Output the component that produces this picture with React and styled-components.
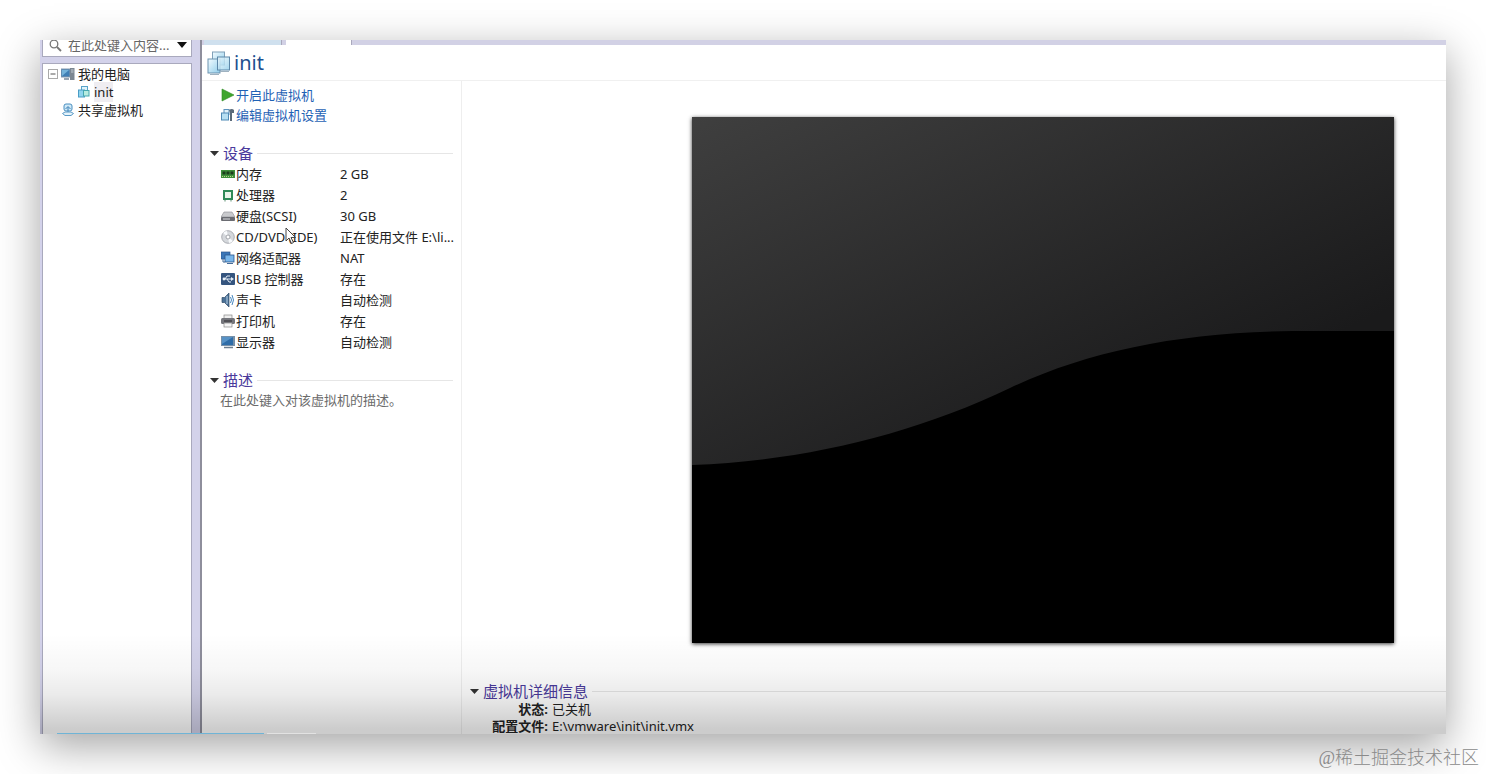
import React from "react";
import styled, { createGlobalStyle } from "styled-components";

const devices = [
  { id: "memory", name: "内存", value: "2 GB" },
  { id: "cpu", name: "处理器", value: "2" },
  { id: "disk", name: "硬盘(SCSI)", value: "30 GB" },
  { id: "cd", name: "CD/DVD (IDE)", value: "正在使用文件 E:\\li..." },
  { id: "network", name: "网络适配器", value: "NAT" },
  { id: "usb", name: "USB 控制器", value: "存在" },
  { id: "sound", name: "声卡", value: "自动检测" },
  { id: "printer", name: "打印机", value: "存在" },
  { id: "display", name: "显示器", value: "自动检测" },
];

const details = [
  { label: "状态:", value: "已关机" },
  { label: "配置文件:", value: "E:\\vmware\\init\\init.vmx" },
];

const icons = {
  memory: (
    <>
      <rect x="0" y="3" width="14" height="8" fill="#3f8f3c" />
      <path d="M1.5 4.5h3v3h-3zM5.5 4.5h3v3h-3zM9.5 4.5h3v3h-3z" fill="#1c3d1d" />
      <path d="M1 9.5h12" stroke="#b9d68a" strokeDasharray="1 1" />
    </>
  ),
  cpu: (
    <>
      <rect x="2" y="2" width="10" height="10" fill="#2f8a58" />
      <rect x="4" y="4" width="6" height="6" fill="#e9f5ea" />
      <path d="M4 12v1.500M10 12v1.500" stroke="#5b8f70" />
    </>
  ),
  disk: (
    <>
      <path d="M3 3h8l3 5H0z" fill="#c9cacd" stroke="#8b8c90" strokeWidth=".6" />
      <rect x="0" y="8" width="14" height="4" rx="1" fill="#6b6c72" />
      <path d="M2 10h7" stroke="#d9dadd" />
    </>
  ),
  cd: (
    <>
      <circle cx="7" cy="7" r="6.300" fill="#d5d8dc" stroke="#9a9da3" strokeWidth=".8" />
      <path d="M7 7L2 3a6 6 0 0 1 4-2zM7 7l5 4a6 6 0 0 1-4 2z" fill="#f8fafc" />
      <circle cx="7" cy="7" r="2" fill="#fff" stroke="#8f9399" strokeWidth=".8" />
    </>
  ),
  network: (
    <>
      <rect x="0" y="1" width="9" height="7" fill="#3a76b8" stroke="#2b568c" strokeWidth=".7" />
      <rect x="4" y="4" width="9" height="7" fill="#79b6ea" stroke="#2b568c" strokeWidth=".8" />
      <path d="M2 8v3h2M6 12.500h6" stroke="#456c99" fill="none" />
    </>
  ),
  usb: (
    <>
      <rect x="0" y="1" width="14" height="12" rx="1" fill="#35557f" />
      <path d="M2 7h9M4 7l2-3h3M6 7l2 3h2" stroke="#e7eff8" fill="none" />
      <path d="M10 5l3 2-3 2z" fill="#e7eff8" />
      <circle cx="3" cy="7" r="1.400" fill="#e7eff8" />
    </>
  ),
  sound: (
    <>
      <path d="M1 4.500h2.500L8 0v14L3.500 9.500H1z" fill="#4b7196" stroke="#2f4b69" strokeWidth=".7" />
      <path d="M6 3v8" stroke="#b9d3e8" />
      <path d="M9.500 4q2 3 0 6M11 2q3 5 0 10" stroke="#4788c0" fill="none" />
    </>
  ),
  printer: (
    <>
      <rect x="3" y="1" width="8" height="4" fill="#eee" stroke="#888" strokeWidth=".7" />
      <rect x="0" y="4" width="14" height="6" rx="1.500" fill="#74757b" />
      <path d="M3 7h8" stroke="#2c2c31" />
      <rect x="3" y="9" width="8" height="4" fill="#f5f5f5" stroke="#888" strokeWidth=".7" />
    </>
  ),
  display: (
    <>
      <rect x="0" y="1" width="14" height="10" fill="#7790a8" />
      <rect x="1" y="2" width="11" height="8" fill="#2f6da8" />
      <path d="M1 2h11L1 9z" fill="#5792c6" />
      <path d="M3 12.500h9" stroke="#6c7d8e" strokeWidth="1.500" />
    </>
  ),
  computer: (
    <>
      <rect x="0" y="2" width="9" height="8" fill="#3f7fb5" stroke="#8499ad" />
      <path d="M1 3h7L1 9z" fill="#74b3da" />
      <path d="M3 12h5" stroke="#77889a" strokeWidth="1.500" />
      <rect x="9" y="1" width="4.500" height="12" fill="#7b8691" />
      <path d="M10 3h2.500M10 5h2.500" stroke="#c4ccd4" />
    </>
  ),
  vm: (
    <>
      <rect x="4.500" y="1.500" width="6" height="6" fill="#dff3fb" stroke="#58a3c9" />
      <rect x="1.500" y="5" width="6" height="7" fill="#8fd4ee" stroke="#4a9cc6" />
      <rect x="6.500" y="5.500" width="5.500" height="5.500" fill="#b8ecdf" stroke="#46a7b0" />
    </>
  ),
  shared: (
    <>
      <rect x="3" y="1" width="8" height="7" rx="2" fill="#cfe9f7" stroke="#4a8fc0" />
      <path d="M7 4v7M4.500 6L7 3.500 9.500 6" stroke="#3d82b8" fill="none" />
      <path d="M1.500 10.500L4 9h6l2.500 1.500L10 12.500H4z" stroke="#5a9ac6" fill="#e5f3fb" />
    </>
  ),
  play: <path d="M1 1l12 6-12 6z" fill="#3fa52e" stroke="#2c8a22" strokeWidth=".6" />,
  edit: (
    <>
      <rect x="3" y="1.500" width="5" height="5" fill="#e3f3fb" stroke="#5c93bd" />
      <rect x=".5" y="5" width="7" height="7" fill="#b6dff2" stroke="#4f8ab5" />
      <path d="M8 2q3-2 5 0v3h-2v8H9V5z" fill="#5a6a7a" />
    </>
  ),
};

function Icon({ name, size = 14 }) {
  return (
    <StyledIcon width={size} height={size} viewBox='0 0 14 14' aria-hidden='true'>
      {icons[name]}
    </StyledIcon>
  );
}

function Section({ title, children }) {
  return (
    <section>
      <StyledHeading>
        <svg width='9' height='5' viewBox='0 0 9 5'>
          <path d='M0 0h9L4.500 5z' fill='#333' />
        </svg>
        <h2>{title}</h2>
      </StyledHeading>
      {children}
    </section>
  );
}

function Sidebar() {
  return (
    <StyledSidebar>
      <StyledSearch>
        <svg width='13' height='13' viewBox='0 0 13 13'>
          <circle cx='5' cy='5' r='3.800' fill='none' stroke='#777' strokeWidth='1.300' />
          <path d='M8 8l4 4' stroke='#777' strokeWidth='1.800' />
        </svg>
        <input type='text' aria-label='搜索' placeholder='在此处键入内容...' />
        <button type='button' aria-label='展开'>
          <svg width='10' height='6' viewBox='0 0 10 6'>
            <path d='M0 0h10L5 6z' fill='#111' />
          </svg>
        </button>
      </StyledSearch>
      <StyledTree>
        <StyledNode>
          <StyledToggle type='button' aria-label='折叠'>
            <svg width='10' height='10' viewBox='0 0 10 10'>
              <rect x='.5' y='.5' width='9' height='9' fill='#fff' stroke='#aaa' />
              <path d='M2.500 5h5' stroke='#555' />
            </svg>
          </StyledToggle>
          <Icon name='computer' />
          <span>我的电脑</span>
        </StyledNode>
        <StyledNode $indent={30} $selected>
          <Icon name='vm' />
          <span>init</span>
        </StyledNode>
        <StyledNode $indent={14}>
          <Icon name='shared' />
          <span>共享虚拟机</span>
        </StyledNode>
      </StyledTree>
    </StyledSidebar>
  );
}

function Summary() {
  return (
    <StyledSummary>
      <StyledActions>
        <a href='#start'>
          <Icon name='play' />
          开启此虚拟机
        </a>
        <a href='#settings'>
          <Icon name='edit' />
          编辑虚拟机设置
        </a>
      </StyledActions>
      <Section title='设备'>
        <StyledDevices>
          <tbody>
            {devices.map((d) => (
              <tr key={d.id}>
                <th scope='row'>
                  <StyledDevice>
                    <Icon name={d.id} />
                    {d.name}
                    {d.id === "cd" && <Pointer />}
                  </StyledDevice>
                </th>
                <td>{d.value}</td>
              </tr>
            ))}
          </tbody>
        </StyledDevices>
      </Section>
      <Section title='描述'>
        <StyledDescription
          rows={1}
          aria-label='描述'
          placeholder='在此处键入对该虚拟机的描述。'
        />
      </Section>
    </StyledSummary>
  );
}

function Pointer() {
  return (
    <StyledPointer width='12' height='18' viewBox='0 0 12 18'>
      <path
        d='M1 1v13l3-3 2.500 5.500 2-1L6 10.500h4.500z'
        fill='#fff'
        stroke='#444'
      />
    </StyledPointer>
  );
}

function Preview() {
  return (
    <StyledPreview viewBox='0 0 702 526' role='img' aria-label='init'>
      <defs>
        <linearGradient
          id='sheen'
          gradientUnits='userSpaceOnUse'
          x1='0'
          y1='0'
          x2='210'
          y2='430'
        >
          <stop offset='0' stopColor='#3f3f3f' />
          <stop offset='1' stopColor='#1a1a1b' />
        </linearGradient>
      </defs>
      <rect width='702' height='526' fill='#000' />
      <path
        d='M0 0H702V214H600C490 215 395 234 318 271C220 318 110 344 0 348Z'
        fill='url(#sheen)'
      />
    </StyledPreview>
  );
}

export default function App() {
  return (
    <StyledPage>
      <GlobalStyle />
      <StyledWindow>
        <Sidebar />
        <StyledMain>
          <StyledTabs>
            <StyledTab $width={78} />
            <StyledTab $width={66} $active />
          </StyledTabs>
          <StyledTitle>
            <svg width='24' height='24' viewBox='0 0 24 24'>
              <defs>
                <linearGradient id='glass' x1='0' y1='0' x2='1' y2='1'>
                  <stop offset='0' stopColor='#f2fbff' />
                  <stop offset='1' stopColor='#8fcdea' />
                </linearGradient>
              </defs>
              <rect x='5.500' y='1' width='12' height='13' fill='url(#glass)' stroke='#7fa0b8' />
              <rect x='1' y='8' width='12' height='14' fill='url(#glass)' stroke='#6c93b0' />
              <rect x='10.500' y='6' width='12' height='13' fill='url(#glass)' fillOpacity='.8' stroke='#5d87a8' />
              <path d='M3 23.500h9M13 20.500h9' stroke='#9fb2c0' />
            </svg>
            <h1>init</h1>
          </StyledTitle>
          <StyledContent>
            <Summary />
            <StyledStage>
              <Preview />
              <Section title='虚拟机详细信息'>
                <StyledDetails>
                  <tbody>
                    {details.map((d) => (
                      <tr key={d.label}>
                        <th scope='row'>{d.label}</th>
                        <td>{d.value}</td>
                      </tr>
                    ))}
                  </tbody>
                </StyledDetails>
              </Section>
            </StyledStage>
          </StyledContent>
        </StyledMain>
      </StyledWindow>
      <StyledCredit>@稀土掘金技术社区</StyledCredit>
    </StyledPage>
  );
}

const GlobalStyle = createGlobalStyle`
  * {
    box-sizing: border-box;
    margin: 0;
    padding: 0;
  }
  body {
    background: #fff;
    color: #222;
    font: 13px/20px "Noto Sans", "Noto Sans CJK SC", sans-serif;
  }
  input, textarea, button {
    font: inherit;
    border: none;
    outline: none;
    background: none;
  }
`;

const StyledPage = styled.div`
  display: flex;
  flex-direction: column;
  height: 100vh;
  overflow: hidden;
`;

const StyledWindow = styled.div`
  flex: 1;
  min-height: 0;
  margin: 40px 40px 0;
  display: flex;
  position: relative;
  background: #fff;
  box-shadow: 0 12px 40px rgba(0, 0, 0, 0.36);
  /* fade along the lower edge, with the taskbar line under it */
  &::after {
    content: "";
    position: absolute;
    inset: auto 0 0 0;
    height: 100px;
    pointer-events: none;
    background: linear-gradient(#6fb4d6, #6fb4d6) 17px 100% / 207px 1px no-repeat,
      linear-gradient(#e2e2e2, #e2e2e2) 227px 100% / 49px 1px no-repeat,
      linear-gradient(
        rgba(0, 0, 0, 0),
        rgba(0, 0, 0, 0.03) 35%,
        rgba(0, 0, 0, 0.08) 60%,
        rgba(0, 0, 0, 0.2) 95%,
        rgba(0, 0, 0, 0.2)
      );
  }
`;

const StyledSidebar = styled.aside`
  width: 162px;
  flex-shrink: 0;
  display: flex;
  flex-direction: column;
  gap: 6px;
  overflow: hidden;
  padding: 0 8px 0 2px;
  background: #d3d2ea;
  border-right: 2px solid #8e8e9c;
`;

const StyledSearch = styled.div`
  display: flex;
  align-items: center;
  height: 24px;
  margin-top: -7px;
  flex-shrink: 0;
  padding: 0 4px 0 6px;
  background: #fff;
  border: 1px solid #a9a9bd;
  svg {
    flex-shrink: 0;
  }
  input {
    flex: 1;
    min-width: 0;
    padding-left: 6px;
    color: #222;
  }
  input::placeholder {
    color: #666;
    opacity: 1;
  }
  button {
    display: flex;
  }
`;

const StyledTree = styled.ul`
  flex: 1;
  padding: 1px 4px;
  list-style: none;
  background: #fff;
  border: 1px solid #a9a9bd;
  border-bottom: none;
`;

const StyledNode = styled.li`
  display: flex;
  align-items: center;
  gap: 3px;
  height: 18px;
  padding-left: ${(props) => props.$indent || 1}px;
  white-space: nowrap;
  span {
    background: ${(props) => (props.$selected ? "#efedf1" : "none")};
  }
`;

const StyledToggle = styled.button`
  display: flex;
`;

const StyledIcon = styled.svg`
  flex-shrink: 0;
`;

const StyledMain = styled.main`
  flex: 1;
  min-width: 0;
  display: flex;
  flex-direction: column;
  overflow: hidden;
`;

const StyledTabs = styled.div`
  display: flex;
  gap: 4px;
  height: 5px;
  flex-shrink: 0;
  padding-left: 2px;
  background: #d2d1e5;
`;

const StyledTab = styled.div`
  width: ${(props) => props.$width}px;
  background: ${(props) => (props.$active ? "#fff" : "#cfe0ee")};
  border-right: 1px solid #aaa9bd;
`;

const StyledTitle = styled.header`
  display: flex;
  align-items: center;
  gap: 3px;
  height: 36px;
  flex-shrink: 0;
  padding-left: 5px;
  border-bottom: 1px solid #f0f0f0;
  h1 {
    font-size: 20px;
    font-weight: 400;
    color: #1d4f8f;
  }
`;

const StyledContent = styled.div`
  flex: 1;
  min-height: 0;
  display: flex;
`;

const StyledSummary = styled.div`
  width: 260px;
  flex-shrink: 0;
  padding: 4px 8px 0;
  border-right: 1px solid #eee;
  section {
    margin-bottom: 18px;
  }
`;

const StyledActions = styled.nav`
  display: flex;
  flex-direction: column;
  align-items: flex-start;
  padding: 0 0 18px 11px;
  a {
    display: flex;
    align-items: center;
    gap: 1px;
    color: #1f62b5;
    text-decoration: none;
  }
`;

const StyledHeading = styled.div`
  display: flex;
  align-items: center;
  gap: 4px;
  height: 20px;
  h2 {
    font-size: 15px;
    font-weight: 400;
    color: #4a3a9c;
  }
  &::after {
    content: "";
    flex: 1;
    height: 1px;
    background: #e6e6e6;
  }
`;

const StyledDevices = styled.table`
  width: 100%;
  table-layout: fixed;
  border-collapse: collapse;
  th {
    width: 130px;
    height: 21px;
    padding-left: 11px;
    font-weight: 400;
    text-align: left;
  }
  td {
    white-space: nowrap;
  }
`;

const StyledDevice = styled.div`
  position: relative;
  display: flex;
  align-items: center;
  gap: 1px;
  white-space: nowrap;
`;

const StyledPointer = styled.svg`
  position: absolute;
  left: 64px;
  top: 0;
`;

const StyledDescription = styled.textarea`
  display: block;
  width: 100%;
  height: 20px;
  padding-left: 10px;
  resize: none;
  overflow: hidden;
  &::placeholder {
    color: #6b6b6b;
    opacity: 1;
  }
`;

const StyledStage = styled.div`
  flex: 1;
  min-width: 0;
  display: flex;
  flex-direction: column;
  padding: 36px 0 0 8px;
`;

const StyledPreview = styled.svg`
  align-self: flex-end;
  flex-shrink: 0;
  width: calc(100% - 52px);
  max-width: 702px;
  margin: 0 52px 38px 0;
  box-shadow: 0 1px 4px rgba(0, 0, 0, 0.8);
`;

const StyledDetails = styled.table`
  border-collapse: collapse;
  line-height: 17px;
  th {
    width: 78px;
    font-weight: 700;
    text-align: right;
    white-space: nowrap;
  }
  td {
    padding-left: 4px;
  }
`;

const StyledCredit = styled.footer`
  height: 40px;
  flex-shrink: 0;
  padding-right: 7px;
  position: relative;
  text-align: right;
  font: 300 18px/48px "Liberation Serif", "Noto Sans CJK SC", serif;
  color: #8a8a8a;
`;
